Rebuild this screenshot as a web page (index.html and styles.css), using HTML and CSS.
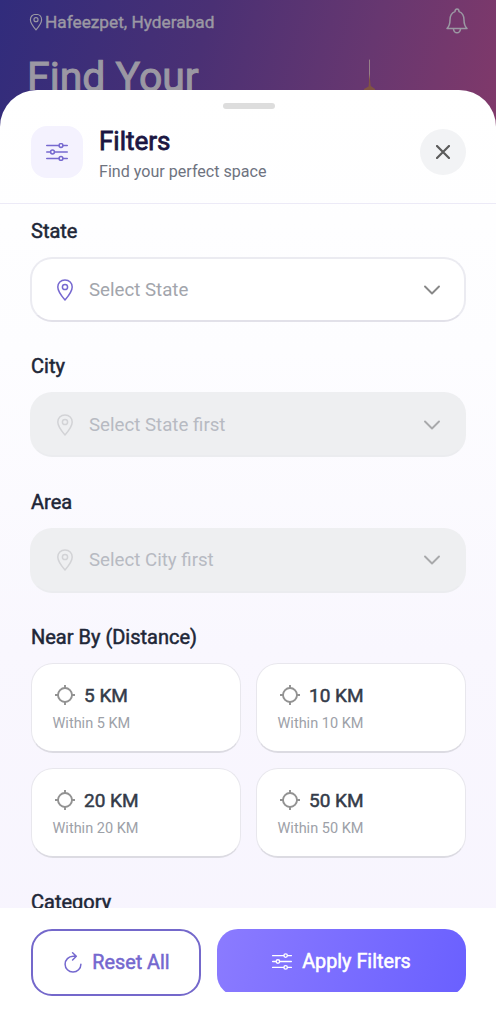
FILE: index.html
```html
<!DOCTYPE html>
<html lang="en">
<head>
<meta charset="utf-8">
<title>Filters</title>
<link rel="stylesheet" href="styles.css">
</head>
<body>
<svg class="symbols" width="0" height="0" aria-hidden="true">
  <symbol id="pin" viewBox="0 0 18 22"><path d="M9 1C4.700 1 1.800 4 1.800 8c0 4.400 4.400 9.800 7.200 13 2.800-3.200 7.200-8.600 7.200-13C16.200 4 13.300 1 9 1z"/><circle cx="9" cy="8" r="2.600"/></symbol>
  <symbol id="sliders" viewBox="0 0 22 18"><path d="M.7 2.500h12.100M17.200 2.500h4.100M.7 9h3.600M8.700 9h12.600M.7 15.500h12.100M17.200 15.500h4.100"/><circle cx="15" cy="2.500" r="1.900"/><circle cx="6.500" cy="9" r="1.900"/><circle cx="15" cy="15.500" r="1.900"/></symbol>
  <symbol id="chevron" viewBox="0 0 16 10"><path d="M1 1.500 8 8.500 15 1.500"/></symbol>
  <symbol id="target" viewBox="0 0 20 20"><circle cx="10" cy="10" r="7"/><path d="M10 0v4M10 16v4M0 10h4M16 10h4"/></symbol>
</svg>
<div class="screen">
  <header class="hero">
    <div class="topbar">
      <div class="location"><svg class="location-pin"><use href="#pin"/></svg><span>Hafeezpet, Hyderabad</span></div>
      <svg class="bell" viewBox="0 0 22 26"><path d="M1 20.500c2.500-2.500 3-5 3-8.500 0-4.500 1.700-7.300 5-8.400C9 2.200 9.800 1 11 1s2 1.200 2 2.600c3.300 1.100 5 3.900 5 8.400 0 3.500.5 6 3 8.500z"/><path d="M7.500 21c.3 2.400 1.600 3.800 3.500 3.800s3.200-1.400 3.500-3.800"/></svg>
    </div>
    <h1 class="headline">Find Your</h1>
    <svg class="spire" viewBox="0 0 16 32"><path class="needle" d="M8.500 1v24"/><path class="tip" d="M8.500 15 7.600 27.500 3 30v2h11v-2l-4.300-3z"/></svg>
  </header>
  <section class="sheet">
    <div class="sheet-head">
      <div class="handle"></div>
      <div class="title-row">
        <div class="badge"><svg class="badge-icon"><use href="#sliders"/></svg></div>
        <div class="titles"><h2>Filters</h2><p>Find your perfect space</p></div>
        <button class="close" aria-label="Close"><svg viewBox="0 0 14 14"><path d="M1 1l12 12M13 1 1 13"/></svg></button>
      </div>
    </div>
    <div class="content">
      <div class="field"><h3>State</h3><div class="select"><svg class="pin"><use href="#pin"/></svg><span>Select State</span><svg class="chevron"><use href="#chevron"/></svg></div></div>
      <div class="field"><h3>City</h3><div class="select disabled"><svg class="pin"><use href="#pin"/></svg><span>Select State first</span><svg class="chevron"><use href="#chevron"/></svg></div></div>
      <div class="field"><h3>Area</h3><div class="select disabled"><svg class="pin"><use href="#pin"/></svg><span>Select City first</span><svg class="chevron"><use href="#chevron"/></svg></div></div>
      <div class="field nearby"><h3>Near By (Distance)</h3>
        <div class="grid">
          <div class="card"><div class="distance"><svg><use href="#target"/></svg><b>5 KM</b></div><small>Within 5 KM</small></div>
          <div class="card"><div class="distance"><svg><use href="#target"/></svg><b>10 KM</b></div><small>Within 10 KM</small></div>
          <div class="card"><div class="distance"><svg><use href="#target"/></svg><b>20 KM</b></div><small>Within 20 KM</small></div>
          <div class="card"><div class="distance"><svg><use href="#target"/></svg><b>50 KM</b></div><small>Within 50 KM</small></div>
        </div>
      </div>
      <div class="field"><h3>Category</h3></div>
    </div>
    <footer class="actions">
      <button class="reset"><svg viewBox="0 0 18 21"><path d="M10.500 4.300H9A7.900 7.900 0 1 0 16.900 12.200M8.600.8l3.700 3.500-3.700 3.700"/></svg><span>Reset All</span></button>
      <div class="apply-wrap"><button class="apply"><svg><use href="#sliders"/></svg><span>Apply Filters</span></button></div>
    </footer>
  </section>
</div>
</body>
</html>
```
FILE: styles.css
```css
* { box-sizing: border-box; }
body { margin: 0; font-family: Roboto, "Liberation Sans", sans-serif; }
h1, h2, h3, p { margin: 0; font-weight: 400; }
h1, h2, h3, b, .location span, .actions span { font-weight: 400; -webkit-text-stroke: .5px currentColor; }
button { border: 0; padding: 0; font: inherit; }
svg { display: block; flex: none; fill: none; stroke: currentColor; stroke-linecap: round; stroke-linejoin: round; }
.symbols { position: absolute; }
.screen { height: 1024px; overflow: hidden; background: linear-gradient(105deg, #312c7c 0, #4a3074 40%, #673770 72%, #81396a 100%) 0 0 / 100% 140px no-repeat; }
.hero { position: relative; height: 90px; padding: 8px 28px 0 27px; color: #9b98a3; overflow: hidden; }
.topbar { display: flex; justify-content: space-between; height: 27px; }
.location { display: flex; align-items: center; gap: 2px; height: 28px; padding-left: 2px; font-size: 17.250px; }
.location span { -webkit-text-stroke-width: .4px; }
.location-pin { width: 14px; height: 18px; stroke-width: 1.500; }
.bell { width: 22px; height: 26px; stroke-width: 1.500; }
.headline { margin-top: 18px; font-size: 41px; line-height: 48px; }
h1.headline { -webkit-text-stroke-width: 1px; }
.spire { position: absolute; left: 361px; top: 59px; width: 16px; height: 32px; }
.needle { stroke: #a3938f; stroke-width: .8; }
.tip { fill: #815442; stroke: none; }
.sheet { display: flex; flex-direction: column; height: 934px; border-radius: 37px 37px 0 0; background: linear-gradient(#fff 0, #fdfdff 28%, #f9f7fe 60%, #f7f4fe 100%); overflow: hidden; }
.sheet-head { flex: none; height: 114px; padding: 13px 30px 0 31px; border-bottom: 1px solid #eceaf7; }
.handle { width: 52px; height: 6px; margin: 0 auto; border-radius: 3px; background: #ddd; }
.title-row { display: flex; align-items: center; margin-top: 17px; height: 52px; }
.badge { display: grid; place-items: center; width: 52px; height: 52px; border-radius: 16px; background: #f4f2fe; color: #7669cf; }
.badge-icon { width: 22px; height: 18px; stroke-width: 1.500; }
.titles { flex: 1; margin-left: 16px; padding-top: 3px; }
.titles h2 { color: #1b1642; font-size: 26px; line-height: 31px; -webkit-text-stroke-width: .8px; }
.titles p { margin-top: 5px; color: #6e737f; font-size: 16.100px; line-height: 20px; }
.close { display: grid; place-items: center; width: 46px; height: 46px; border-radius: 50%; background: #f2f3f5; color: #5b5b5b; }
.close svg { width: 14px; height: 14px; margin-right: 1px; stroke-width: 2.200; }
.content { flex: 1; min-height: 0; overflow: hidden; padding: 15px 30px 0; }
.field { margin-bottom: 32.400px; }
.field h3 { height: 24px; margin: 0 0 14px 1px; color: #202637; font-size: 20px; line-height: 24px; }
.select { display: flex; align-items: center; height: 65px; padding: 0 24px; border: 2px solid #ebebf1; border-bottom-color: #e2e1e9; border-radius: 22px; background: #fff; color: #a2a5ac; font-size: 18.700px; }
.select span { flex: 1; margin-left: 15px; }
.pin { width: 18px; height: 22px; color: #7668d0; stroke-width: 1.500; }
.chevron { width: 16px; height: 10px; color: #888; stroke-width: 1.900; }
.disabled { border-color: #eeeff1; border-bottom-color: #ebecef; background: #eeeff1; color: #b7bac2; }
.disabled .pin { color: #d2d3d6; }
.disabled .chevron { color: #a8a9ab; }
.nearby { margin-bottom: 32px; }
.grid { display: grid; grid-template-columns: 210px 210px; gap: 15px; margin-left: 1px; }
.card { height: 90px; padding: 19px 21px 0 21px; border-radius: 22px; border: 1px solid #e8e7ed; border-bottom: 2px solid #dcdbe2; background: #fff; }
.distance { display: flex; align-items: center; gap: 9.500px; height: 24px; color: #343b49; font-size: 19px; }
.distance svg { width: 20px; height: 20px; margin-left: 1.500px; color: #929292; stroke-width: 1.900; stroke-linecap: butt; }
.card small { display: block; margin-top: 8px; margin-left: -.5px; color: #9da1a8; font-size: 14.500px; line-height: 18px; }
.actions { display: flex; flex: none; align-items: flex-start; gap: 16px; height: 116px; padding: 21px 30px 0 31px; background: #fff; font-size: 20px; }
.reset, .apply { display: flex; align-items: center; justify-content: center; }
.reset { width: 170px; height: 67px; gap: 10px; padding-left: 2px; border: 2px solid #7468cb; border-radius: 21px; background: #fff; color: #7468cf; font-size: 19.800px; }
.reset svg { width: 18px; height: 21px; stroke-width: 1.500; }
.apply-wrap { flex: 1; height: 63px; overflow: hidden; }
.apply { width: 100%; height: 67px; gap: 10px; padding-bottom: 3px; border-radius: 21px; background: linear-gradient(105deg, #8b7bff, #6a60ff); color: #fff; font-size: 19.800px; }
.apply svg { width: 20px; height: 17px; stroke-width: 1.500; }
```
